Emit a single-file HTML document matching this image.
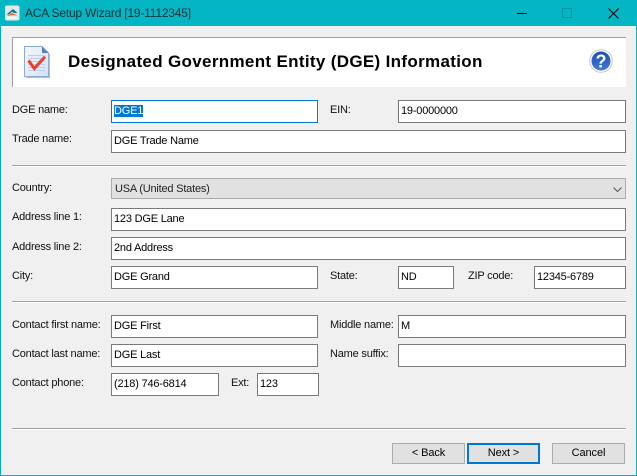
<!DOCTYPE html>
<html><head><meta charset="utf-8">
<style>
html,body{margin:0;padding:0}
body{width:637px;height:476px;overflow:hidden;position:relative;background:#f0f0f0;font-family:"Liberation Sans",Arial,sans-serif;font-size:11px;color:#000}
.a{position:absolute}
.l{position:absolute;font-size:11px;line-height:13px;white-space:nowrap;color:#111;letter-spacing:-.2px;margin-top:1px}
.i{position:absolute;box-sizing:border-box;background:#fff;border:1px solid #7a7a7a;height:23px;padding:3px 0 0 2px;font-size:11px;line-height:14px;white-space:nowrap;color:#000;letter-spacing:-.2px}
.h{position:absolute;left:12px;width:614px;height:1px;background:#a0a0a0;border-bottom:1px solid #fff}
.b{position:absolute;box-sizing:border-box;top:443px;width:73px;height:21px;background:#e1e1e1;border:1px solid #adadad;text-align:center;font-size:11px;line-height:19px;color:#000;letter-spacing:-.1px}
</style></head><body>
<div class="a" style="left:0;top:0;width:637px;height:476px;box-sizing:border-box;border:1px solid #04b4c2;border-top:0"></div>
<div class="a" style="left:0;top:0;width:637px;height:26px;background:#04b6c3"></div>
<svg class="a" style="left:4px;top:5px" width="16" height="16" viewBox="0 0 16 16"><rect x="1" y="0.500" width="14.500" height="15" rx="2" fill="#dfe9ea"/><path d="M2.500 9.500 L9 4 L13.500 8 L10 8 L8 6.800 L5 9.500Z" fill="#17758a"/><path d="M3 11 L8 8 L13.500 10.500 L9 10Z" fill="#e2683a"/><path d="M3 12h10v1.500H3z" fill="#f7f7f7"/></svg>
<div class="a" style="left:25px;top:6px;font-size:12px;line-height:14px;color:#0d3136;white-space:nowrap;letter-spacing:-.2px">ACA Setup Wizard [19-1112345]</div>
<div class="a" style="left:517px;top:13px;width:10px;height:1px;background:#000"></div>
<div class="a" style="left:562px;top:8px;width:10px;height:10px;box-sizing:border-box;border:1px solid #04909b"></div>
<svg class="a" style="left:608px;top:8px" width="11" height="11" viewBox="0 0 11 11"><path d="M.5.5l10 10M10.500.5l-10 10" stroke="#000" stroke-width="1" fill="none"/></svg>

<div class="a" style="left:12px;top:37px;width:614px;height:50px;background:#fff;box-sizing:border-box;border-top:1px solid #a0a0a0;border-left:1px solid #a0a0a0"></div>
<svg class="a" style="left:24px;top:46px" width="26" height="32" viewBox="0 0 26 32"><defs><linearGradient id="d" x1="0" y1="0" x2="1" y2="1"><stop offset="0" stop-color="#f4f8fe"/><stop offset="1" stop-color="#d3e1f6"/></linearGradient></defs><path d="M.5.5H18L24.500 7V30.500H.5Z" fill="url(#d)" stroke="#8fa9d8"/><path d="M18 .5V7H24.500Z" fill="#5a80bd"/><path d="M4 9.500h17M4 12.500h17M4 15.500h17M4 18.500h17M4 21.500h17M4 24.500h17" stroke="#bcd1ee"/><path d="M4.500 14.500l5.800 8L21 10.700" fill="none" stroke="#e8402a" stroke-width="3"/><path d="M25.500 8V31.500H2" fill="none" stroke="#b8bcc4"/></svg>
<div class="a" style="left:68px;top:52px;font-size:17px;line-height:19px;font-weight:bold;white-space:nowrap;letter-spacing:.33px;color:#000">Designated Government Entity (DGE) Information</div>
<svg class="a" style="left:589px;top:49px" width="24" height="24" viewBox="0 0 24 24"><defs><linearGradient id="q" x1="0" y1="0" x2="0" y2="1"><stop offset="0" stop-color="#1f4fae"/><stop offset="1" stop-color="#3f78dc"/></linearGradient></defs><circle cx="12" cy="12" r="11.300" fill="#fff" stroke="#c4c8d0"/><circle cx="12" cy="12" r="9.500" fill="url(#q)"/><text x="12" y="18.500" text-anchor="middle" font-family="Liberation Sans" font-weight="bold" font-size="18" fill="#fff">?</text></svg>

<div class="l" style="left:12px;top:103px">DGE name:</div>
<div class="i" style="left:111px;top:100px;width:207px;border-color:#0078d7"><span style="background:#0078d7;color:#fff;display:inline-block;line-height:12px;padding:0 0 0 0;margin-top:1px;width:29px">DGE1</span></div>
<div class="l" style="left:330px;top:103px">EIN:</div>
<div class="i" style="left:398px;top:100px;width:228px">19-0000000</div>
<div class="l" style="left:12px;top:132px">Trade name:</div>
<div class="i" style="left:111px;top:130px;width:515px">DGE Trade Name</div>
<div class="h" style="top:165px"></div>

<div class="l" style="left:12px;top:181px">Country:</div>
<div class="i" style="left:111px;top:178px;width:515px;height:21px;background:#e1e1e1;border-color:#adadad;padding:3px 0 0 3px;color:#222">USA (United States)</div>
<svg class="a" style="left:613px;top:187px" width="9" height="6" viewBox="0 0 9 6"><path d="M.5.5L4.500 4.500L8.500.5" fill="none" stroke="#555"/></svg>
<div class="l" style="left:12px;top:210px">Address line 1:</div>
<div class="i" style="left:111px;top:208px;width:515px">123 DGE Lane</div>
<div class="l" style="left:12px;top:240px">Address line 2:</div>
<div class="i" style="left:111px;top:237px;width:515px">2nd Address</div>
<div class="l" style="left:12px;top:269px">City:</div>
<div class="i" style="left:111px;top:266px;width:207px">DGE Grand</div>
<div class="l" style="left:330px;top:269px">State:</div>
<div class="i" style="left:398px;top:266px;width:56px">ND</div>
<div class="l" style="left:468px;top:269px">ZIP code:</div>
<div class="i" style="left:534px;top:266px;width:92px">12345-6789</div>
<div class="h" style="top:301px"></div>

<div class="l" style="left:12px;top:318px">Contact first name:</div>
<div class="i" style="left:111px;top:315px;width:207px">DGE First</div>
<div class="l" style="left:330px;top:318px">Middle name:</div>
<div class="i" style="left:398px;top:315px;width:228px">M</div>
<div class="l" style="left:12px;top:347px">Contact last name:</div>
<div class="i" style="left:111px;top:344px;width:207px">DGE Last</div>
<div class="l" style="left:330px;top:347px">Name suffix:</div>
<div class="i" style="left:398px;top:344px;width:228px"></div>
<div class="l" style="left:12px;top:376px">Contact phone:</div>
<div class="i" style="left:111px;top:373px;width:108px">(218) 746-6814</div>
<div class="l" style="left:231px;top:376px">Ext:</div>
<div class="i" style="left:257px;top:373px;width:62px">123</div>
<div class="h" style="top:428px"></div>

<div class="b" style="left:392px">&lt; Back</div>
<div class="b" style="left:467px;border:2px solid #0078d7;line-height:17px">Next &gt;</div>
<div class="b" style="left:552px">Cancel</div>
</body></html>
